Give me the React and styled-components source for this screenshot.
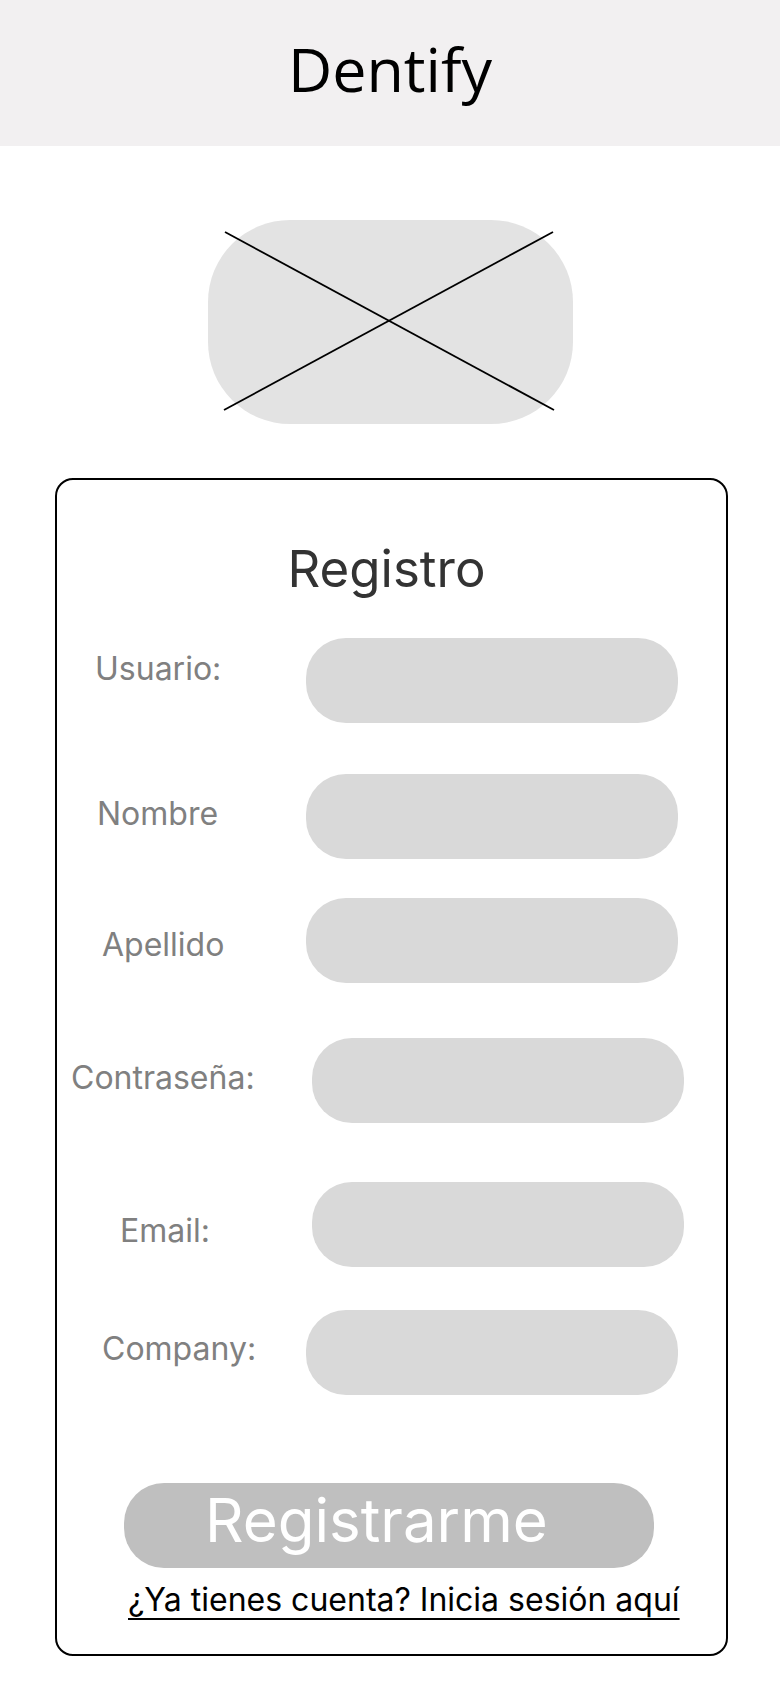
import React from 'react';
import styled, { createGlobalStyle } from 'styled-components';

const GlobalStyle = createGlobalStyle`
  body {
    margin: 0;
    background: #ffffff;
    font-family: Inter, "Liberation Sans", sans-serif;
  }
  * {
    box-sizing: border-box;
  }
`;

const Page = styled.div`
  width: 780px;
  min-height: 1688px;
  background: #ffffff;
`;

const Header = styled.header`
  height: 146px;
  background: #f2f0f1;
  display: flex;
  align-items: center;
  justify-content: center;
  padding-bottom: 8px;
`;

const Brand = styled.h1`
  margin: 0;
  font-family: "Open Sans", "Noto Sans", sans-serif;
  font-weight: 400;
  font-size: 61px;
  line-height: 60px;
  color: #000;
`;

const Placeholder = styled.div`
  position: relative;
  width: 365px;
  height: 204px;
  margin: 74px 0 0 208px;
  background: #e3e3e3;
  border-radius: 82px;
`;

const Cross = styled.svg`
  position: absolute;
  left: 0;
  top: 0;
  overflow: visible;
`;

const Card = styled.section`
  width: 673px;
  margin: 54px 0 0 55px;
  border: 2px solid #000;
  border-radius: 18px;
  padding: 61px 0 34px 0;
`;

const Title = styled.h2`
  margin: 0;
  padding-right: 10px;
  text-align: center;
  font-size: 51px;
  line-height: 56px;
  font-weight: 400;
  color: #333333;
`;

const Row = styled.div`
  display: grid;
  grid-template-columns: ${({ $inputX }) => $inputX - 57}px 372px;
  align-items: start;
  margin-top: ${({ $top }) => $top}px;
`;

const Label = styled.label`
  padding-left: ${({ $x }) => $x - 57}px;
  margin-top: ${({ $dy }) => $dy}px;
  font-size: 32px;
  line-height: 40px;
  color: #808080;
  white-space: nowrap;
`;

const Field = styled.input`
  width: 372px;
  height: 85px;
  border: none;
  border-radius: 40px;
  background: #d9d9d9;
  outline: none;
  padding: 0 28px;
  font-family: inherit;
  font-size: 28px;
`;

const Submit = styled.button`
  display: flex;
  align-items: center;
  width: 530px;
  height: 85px;
  margin: 88px 0 0 67px;
  padding: 0 0 10px 81px;
  border: none;
  border-radius: 40px;
  background: #bfbfbf;
  color: #ffffff;
  font-family: inherit;
  font-size: 60px;
  line-height: 75px;
  font-weight: 400;
  cursor: pointer;
`;

const LoginLink = styled.a`
  display: block;
  margin: 12px 0 0 71px;
  font-size: 32px;
  line-height: 40px;
  color: #000;
  text-decoration: underline;
  text-decoration-thickness: 2px;
  text-underline-offset: 7px;
  white-space: nowrap;
`;

const fields = [
  { label: 'Usuario:', x: 95, inputX: 306, top: 41, dy: 11 },
  { label: 'Nombre', x: 97, inputX: 306, top: 51, dy: 20 },
  { label: 'Apellido', x: 102, inputX: 306, top: 39, dy: 27 },
  { label: 'Contraseña:', x: 71, inputX: 312, top: 55, dy: 20 },
  { label: 'Email:', x: 120, inputX: 312, top: 59, dy: 29 },
  { label: 'Company:', x: 102, inputX: 306, top: 43, dy: 19 },
];

const App = () => {
  return (
    <Page>
      <GlobalStyle />
      <Header>
        <Brand>Dentify</Brand>
      </Header>
      <Placeholder>
        <Cross width="365" height="204">
          <line x1="17" y1="12" x2="346" y2="190" stroke="#000" strokeWidth="1.8" />
          <line x1="16" y1="190" x2="345" y2="12" stroke="#000" strokeWidth="1.8" />
        </Cross>
      </Placeholder>
      <Card>
        <Title>Registro</Title>
        {fields.map((f) => (
          <Row key={f.label} $inputX={f.inputX} $top={f.top}>
            <Label $x={f.x} $dy={f.dy}>{f.label}</Label>
            <Field type={f.label.startsWith('Contra') ? 'password' : 'text'} />
          </Row>
        ))}
        <Submit>Registrarme</Submit>
        <LoginLink href="#">¿Ya tienes cuenta? Inicia sesión aquí</LoginLink>
      </Card>
    </Page>
  );
};

export default App;
